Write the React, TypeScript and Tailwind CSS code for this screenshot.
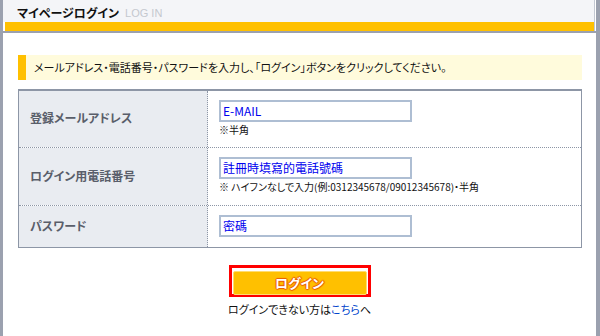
import React from 'react';

const jp = "font-['Noto_Sans_CJK_JP','Noto_Sans_CJK_TC',sans-serif] [font-feature-settings:'palt']";

const rows = [
  { label: '登録メールアドレス', value: 'E-MAIL', note: '※半角', h: 'h-[56px]', pt: 'pt-[9px]' },
  {
    label: 'ログイン用電話番号',
    value: '註冊時填寫的電話號碼',
    note: '※ ハイフンなしで入力(例:0312345678/09012345678)・半角',
    h: 'h-[58px]',
    pt: 'pt-[9px]',
  },
  { label: 'パスワード', value: '密碼', note: '', h: 'h-[42px]', pt: 'pt-[9px]' },
];

export default function App() {
  return (
    <div className={`min-h-screen h-[336px] bg-white border-l-[3px] border-r-[4px] border-[#9ba1af] flex flex-col ${jp}`}>
      {/* Header */}
      <div className="border-r border-[#c3c8d2] mr-[1px]">
        <div className="h-[22px] bg-[#f4f5f8] flex items-end pl-[14px] pb-[3px] gap-[6px]">
          <span className="text-[12px] leading-none font-bold text-[#111]">マイページログイン</span>
          <span className="text-[11px] leading-none text-[#c4c8cf] font-['Liberation_Sans',sans-serif]">LOG IN</span>
        </div>
        <div className="h-[9px] bg-[#ffc000] ml-[2px]" />
      </div>
      <div className="h-[2px] bg-[#9ba1af]" />

      {/* Body */}
      <div className="pl-[15px] pr-[14px] pt-[22px]">
        <div className="h-[25px] bg-[#fffbdc] border-l-[8px] border-[#ffc000] flex items-center pl-[8px] text-[11px] text-[#111]">
          メールアドレス・電話番号・パスワードを入力し、「ログイン」ボタンをクリックしてください。
        </div>

        <div className="mt-[9px] border border-t-2 border-[#8d96a6]">
          {rows.map((r, i) => (
            <div
              key={r.label}
              className={`grid grid-cols-[189px_1fr] ${r.h} ${i > 0 ? 'border-t border-dotted border-[#8d96a6]' : ''}`}
            >
              <div className="bg-[#e9ecf1] border-r border-dotted border-[#8d96a6] flex items-center pl-[11px] pb-[2px] text-[12px] font-semibold text-[#595e6a]">
                {r.label}
              </div>
              <div className={`pl-[11px] ${r.pt}`}>
                <div className="w-[193px] h-[22px] border-2 border-[#aebed3] flex items-center px-[2px] text-[12px] text-[#0000ee]">
                  {r.value}
                </div>
                {r.note && <div className="mt-[2px] text-[10px] leading-[12px] text-[#111]">{r.note}</div>}
              </div>
            </div>
          ))}
        </div>
      </div>

      {/* Button */}
      <div className="flex flex-col items-center mt-[17px]">
        <div className="w-[142px] h-[32px] border-[3px] border-[#ff0000] bg-white p-[1px]">
          <button className="w-full h-full bg-[#ffc000] border border-[#ffdc70] rounded-[2px] text-[13px] leading-none font-bold text-white [text-shadow:0_0_1px_#e85a00,1px_0_1px_#e85a00,-1px_0_1px_#e85a00,0_1px_1px_#e85a00,0_-1px_1px_#e85a00]">
            ログイン
          </button>
        </div>
        <div className="mt-[4px] text-[11px] text-[#111]">
          ログインできない方は<span className="text-[#0044cc]">こちら</span>へ
        </div>
      </div>
    </div>
  );
}
